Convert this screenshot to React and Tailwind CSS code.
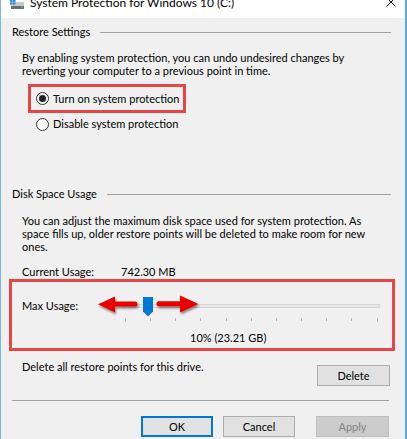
import React from "react";

function Radio({ checked }) {
  return (
    <div className="w-[13px] h-[13px] rounded-full border border-[#333333] bg-white flex items-center justify-center shrink-0">
      {checked && <div className="w-[7px] h-[7px] rounded-full bg-[#222222]" />}
    </div>
  );
}

function Btn({ children, variant }) {
  const base = "h-[21px] flex items-center justify-center leading-none";
  if (variant === "default")
    return <div className={`${base} w-[72px] bg-[#e1e1e1] border-2 border-[#0078d7]`}>{children}</div>;
  if (variant === "disabled")
    return <div className={`${base} w-[73px] bg-[#cccccc] border border-[#bfbfbf] text-[#838383]`}>{children}</div>;
  return <div className={`${base} w-[72px] bg-[#e1e1e1] border border-[#adadad]`}>{children}</div>;
}

const ticks = Array.from({ length: 11 }, (_, i) => i);

export default function App() {
  return (
    <div className="w-[407px] h-[439px] overflow-hidden bg-[#f0f0f0] border-l border-l-[#78b6ec] border-r-2 border-r-[#5aa6e6] flex flex-col text-black text-[11px] font-['Lato',sans-serif]">
      {/* Title bar */}
      <div className="h-[18px] shrink-0 bg-white flex items-start overflow-hidden">
        <svg className="ml-[9px] shrink-0" width="15" height="10" viewBox="0 0 15 10">
          <rect x="1" y="2" width="13" height="7" fill="#c8c8c8" />
          <rect x="1" y="6" width="13" height="3" fill="#6b6b6b" />
          <rect x="11" y="6.5" width="2" height="1.2" fill="#3fd23f" />
          <rect x="0" y="0" width="2.5" height="2" fill="#1e88e5" />
          <rect x="3" y="0" width="2.5" height="2" fill="#1e88e5" />
          <rect x="0" y="2.5" width="2.5" height="2" fill="#1e88e5" />
          <rect x="3" y="2.5" width="2.5" height="2" fill="#1e88e5" />
        </svg>
        <div className="ml-[5px] -mt-[5px] text-[12px] leading-[16px] whitespace-nowrap">
          System Protection for Windows 10 (C:)
        </div>
        <svg className="ml-auto mr-[9px] -mt-[3px] shrink-0" width="10" height="10" viewBox="0 0 10 10">
          <path d="M0.5 0.5 L9.5 9.5 M9.5 0.5 L0.5 9.5" stroke="#111" strokeWidth="1" />
        </svg>
      </div>

      {/* Content */}
      <div className="flex flex-col pl-[11px] pr-[14px]">
        <div className="mt-[7px] h-[14px] flex items-center">
          <span className="leading-[14px] whitespace-nowrap">Restore Settings</span>
          <div className="ml-[10px] flex-1 h-px bg-[#a0a0a0]" />
        </div>

        <div className="mt-[12px] pl-[10px] leading-[13px] whitespace-nowrap">
          By enabling system protection, you can undo undesired changes by
          <br />
          reverting your computer to a previous point in time.
        </div>

        <div className="mt-[7px] ml-[16px] w-[158px] h-[29px] border-[3px] border-[#e64646] flex items-center pl-[5px] gap-[4px]">
          <Radio checked />
          <span className="leading-[14px] whitespace-nowrap">Turn on system protection</span>
        </div>

        <div className="mt-[4px] h-[14px] pl-[24px] flex items-center gap-[4px]">
          <Radio />
          <span className="leading-[14px] whitespace-nowrap">Disable system protection</span>
        </div>

        <div className="mt-[56px] h-[14px] flex items-center">
          <span className="leading-[14px] whitespace-nowrap">Disk Space Usage</span>
          <div className="ml-[10px] flex-1 h-px bg-[#a0a0a0]" />
        </div>

        <div className="mt-[13px] pl-[10px] leading-[13px] whitespace-nowrap">
          You can adjust the maximum disk space used for system protection. As
          <br />
          space fills up, older restore points will be deleted to make room for new
          <br />
          ones.
        </div>

        <div className="mt-[12px] h-[14px] pl-[10px] flex items-center">
          <span className="w-[99px] leading-[14px] whitespace-nowrap">Current Usage:</span>
          <span className="leading-[14px] whitespace-nowrap">742.30 MB</span>
        </div>

        {/* Max usage box */}
        <div className="-ml-[3px] -mr-[4px] h-[72px] border-[3px] border-[#e64646] flex flex-col">
          <div className="mt-[17px] h-[14px] flex items-center">
            <span className="pl-[10px] w-[98px] leading-[14px] whitespace-nowrap">Max Usage:</span>
            <div className="relative flex-1 h-[14px]">
              <div className="absolute left-[12px] top-[5px] w-[258px] h-[4px] bg-[#e7e7e7] border border-[#d6d6d6]" />
              {ticks.map((i) => (
                <div
                  key={i}
                  className={`absolute w-px bg-[#b0b0b0] top-[19px] ${i === 0 || i === 10 ? "h-[4px]" : "h-[3px]"}`}
                  style={{ left: `${15 + Math.round(i * 25.15)}px` }}
                />
              ))}
              <svg className="absolute left-[33px] -top-[2px]" width="10" height="20" viewBox="0 0 10 20">
                <path d="M0 0 H10 V14.5 L5 19.5 L0 14.5 Z" fill="#0078d7" />
              </svg>
              <svg className="absolute -left-[16px] -top-[7px]" width="112" height="28" viewBox="0 0 112 28">
                <defs>
                  <filter id="sh" x="-10%" y="-30%" width="130%" height="170%">
                    <feDropShadow dx="1" dy="2" stdDeviation="1.2" floodColor="#000" floodOpacity="0.45" />
                  </filter>
                </defs>
                <g filter="url(#sh)" fill="#e80000">
                  <path d="M4 12.3 L21 4.5 L21 9.5 L41 9.5 Q43.5 9.5 43.5 12 Q43.5 14.5 41 14.5 L21 14.5 L21 20.5 Z" />
                  <path d="M104.5 12 L86 3.5 L86 9.3 L65 9.3 Q62.5 9.3 62.5 11.8 Q62.5 14.3 65 14.3 L86 14.3 L86 20.5 Z" />
                </g>
              </svg>
            </div>
          </div>
          <div className="mt-[18px] h-[14px] pl-[178px] flex items-center">
            <span className="leading-[14px] whitespace-nowrap">10% (23.21 GB)</span>
          </div>
        </div>

        <div className="flex items-start justify-between">
          <span className="mt-[9px] pl-[10px] leading-[14px] whitespace-nowrap">
            Delete all restore points for this drive.
          </span>
          <div className="mt-[14px] mr-[1px] w-[73px] h-[21px] bg-[#e1e1e1] border border-[#adadad] flex items-center justify-center leading-none">
            Delete
          </div>
        </div>

        <div className="mt-[14px] mr-[2px] h-px bg-[#a0a0a0]" />

        <div className="mt-[15px] mr-[2px] flex justify-end gap-[10px]">
          <Btn variant="default">OK</Btn>
          <Btn>Cancel</Btn>
          <div className="w-px" />
          <Btn variant="disabled">Apply</Btn>
        </div>
      </div>
    </div>
  );
}
